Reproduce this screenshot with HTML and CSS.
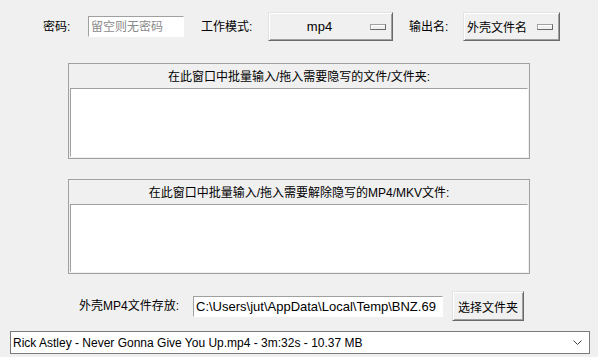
FILE: index.html
```html
<!DOCTYPE html>
<html lang="zh-CN">
<head>
    <meta charset="UTF-8">
    <title>隐写工具</title>
    <link rel="stylesheet" href="styles.css">
</head>
<body>

    <div class="top-row">
        <span class="label lbl-pwd">密码:</span>
        <input class="entry pwd" type="text" placeholder="留空则无密码">
        <span class="label lbl-mode">工作模式:</span>
        <div class="menubtn mode">
            <span class="menu-text">mp4</span>
            <span class="indicator"></span>
        </div>
        <span class="label lbl-out">输出名:</span>
        <div class="menubtn outname">
            <span class="menu-text left">外壳文件名</span>
            <span class="indicator"></span>
        </div>
    </div>

    <!-- 隐写输入 -->
    <div class="frame first">
        <div class="frame-head">在此窗口中批量输入/拖入需要隐写的文件/文件夹:</div>
        <textarea class="drop"></textarea>
    </div>

    <!-- 解除隐写输入 -->
    <div class="frame second">
        <div class="frame-head">在此窗口中批量输入/拖入需要解除隐写的MP4/MKV文件:</div>
        <textarea class="drop"></textarea>
    </div>

    <div class="save-row">
        <span class="label lbl-save">外壳MP4文件存放:</span>
        <div class="entry path">C:\Users\jut\AppData\Local\Temp\BNZ.69</div>
        <button class="btn">选择文件夹</button>
    </div>

    <div class="combo">
        <span class="combo-text">Rick Astley - Never Gonna Give You Up.mp4 - 3m:32s - 10.37 MB</span>
        <svg class="chevron" width="9" height="5" viewBox="0 0 9 5">
            <polyline points="0.5,0.5 4.5,4.5 8.5,0.5" fill="none" stroke="#444" stroke-width="1"/>
        </svg>
    </div>

</body>
</html>
```

FILE: styles.css
```css
html, body {
    margin: 0;
    padding: 0;
}
body {
    width: 598px;
    height: 357px;
    overflow: hidden;
    background: #f0f0f0;
    font-family: "Liberation Sans", "Noto Sans CJK SC", sans-serif;
    font-size: 12px;
    color: #000;
}
.label {
    line-height: 16px;
    white-space: nowrap;
}
.top-row {
    display: flex;
    align-items: center;
    height: 29px;
    margin-top: 12px;
    padding-left: 43px;
}
.lbl-pwd {
    width: 45px;
}
.entry {
    box-sizing: border-box;
    background: #fff;
    border: 1px solid;
    border-color: #a0a0a0 #fff #fff #a0a0a0;
    font: inherit;
    color: #000;
    outline: none;
}
.pwd {
    width: 96px;
    height: 21px;
    padding: 0 2px;
}
.pwd::placeholder {
    color: #8a8a8a;
}
.lbl-mode {
    margin-left: 17px;
    width: 67px;
}
.lbl-out {
    margin-left: 16px;
    width: 54px;
}
.menubtn {
    box-sizing: border-box;
    height: 29px;
    display: flex;
    align-items: center;
    border: 1px solid;
    border-color: #e3e3e3 #696969 #696969 #e3e3e3;
    box-shadow: inset 1px 1px #fff, inset -1px -1px #a0a0a0;
    background: #f0f0f0;
}
.mode {
    width: 125px;
    padding: 0 6px 0 0;
}
.mode .menu-text {
    flex: 1;
    text-align: center;
    font-size: 13px;
}
.outname {
    width: 97px;
    padding: 0 6px 0 3px;
}
.outname .menu-text {
    flex: 1;
}
.indicator {
    box-sizing: border-box;
    width: 16px;
    height: 6px;
    border: 1px solid;
    border-color: #a0a0a0 #696969 #696969 #a0a0a0;
    box-shadow: inset 1px 1px #fff;
    background: #f0f0f0;
}
.frame {
    box-sizing: border-box;
    margin-left: 68px;
    width: 462px;
    border: 1px solid #a0a0a0;
    padding: 0 1px 1px 1px;
    display: flex;
    flex-direction: column;
}
.first {
    margin-top: 22px;
    height: 96px;
}
.second {
    margin-top: 20px;
    height: 95px;
}
.frame-head {
    height: 24px;
    line-height: 26px;
    text-align: center;
    white-space: nowrap;
}
.drop {
    flex: 1;
    resize: none;
    margin: 0;
    border: 1px solid;
    border-color: #a0a0a0 #fff #fff #a0a0a0;
    background: #fff;
    outline: none;
}
.save-row {
    display: flex;
    align-items: center;
    height: 30px;
    margin-top: 17px;
    padding-left: 79px;
}
.lbl-save {
    width: 114px;
}
.path {
    width: 250px;
    height: 21px;
    line-height: 19px;
    padding: 0 2px;
    font-size: 13px;
    white-space: nowrap;
    overflow: hidden;
}
.btn {
    box-sizing: border-box;
    margin-left: 9px;
    width: 72px;
    height: 30px;
    padding: 0;
    font: inherit;
    color: #000;
    border: 1px solid;
    border-color: #e3e3e3 #696969 #696969 #e3e3e3;
    box-shadow: inset 1px 1px #fff, inset -1px -1px #a0a0a0;
    background: #f0f0f0;
}
.combo {
    box-sizing: border-box;
    margin: 10px 0 0 10px;
    width: 580px;
    height: 23px;
    border: 1px solid #7a7a7a;
    background: #fff;
    display: flex;
    align-items: center;
    padding: 0 7px 0 2px;
}
.combo-text {
    flex: 1;
    white-space: nowrap;
}
```
